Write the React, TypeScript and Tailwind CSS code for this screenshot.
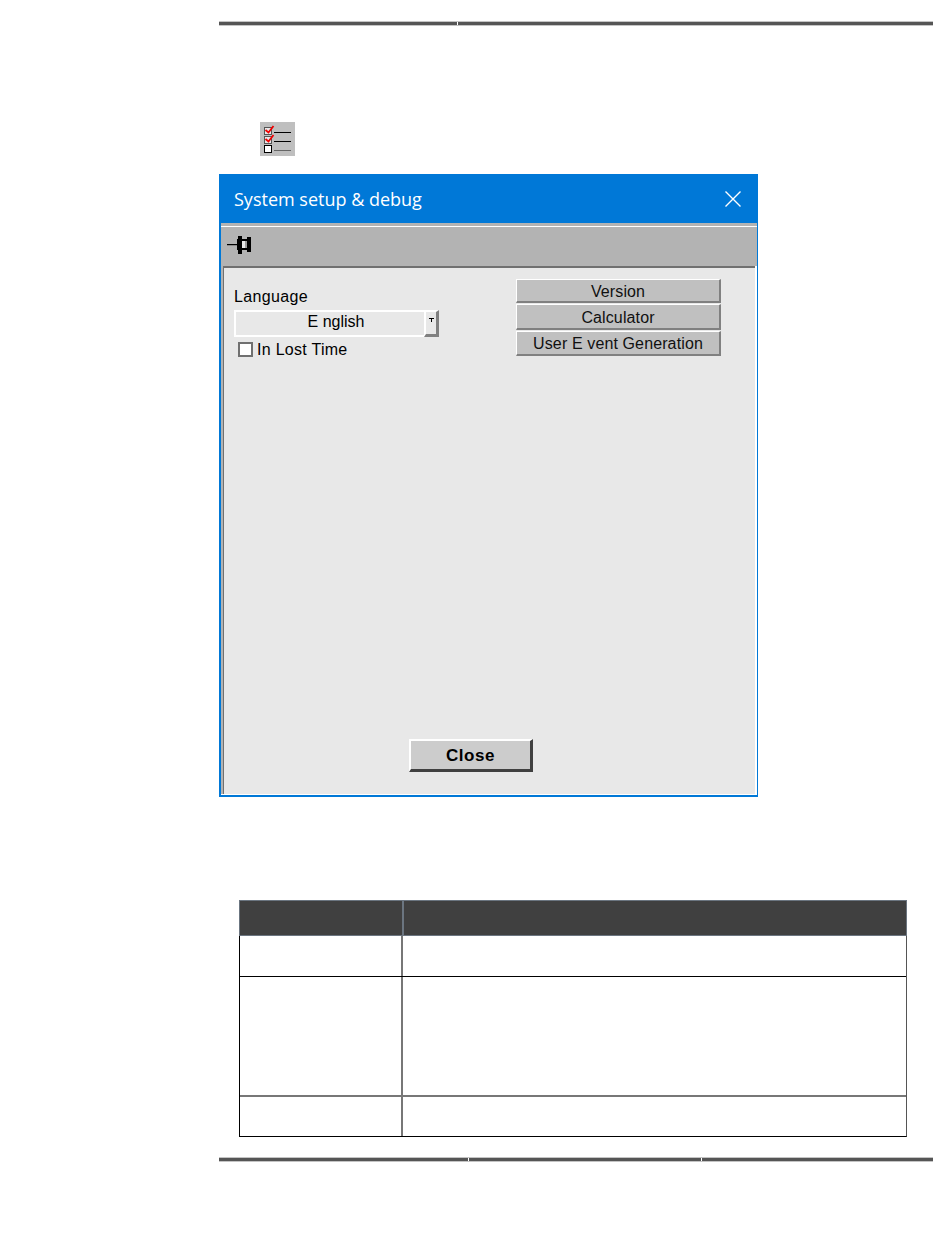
function Rule({ segments }: { segments: number[] }) {
  return (
    <div className="flex gap-px w-[714px] h-[5px] border-y border-[#c4c4c4] bg-white">
      {segments.map((w, i) => (
        <div key={i} className="h-full bg-[#555555]" style={{ flex: `${w} 0 0` }} />
      ))}
    </div>
  );
}

function ChecklistIcon() {
  return (
    <svg width="35" height="34" viewBox="0 0 35 34" className="block bg-[#bfbfbf]">
      <rect x="4.5" y="5.5" width="7" height="7" fill="#e8e8e8" stroke="#555" />
      <rect x="4.5" y="14.5" width="7" height="7" fill="#e8e8e8" stroke="#555" />
      <rect x="4.5" y="23.5" width="7" height="7" fill="#fff" stroke="#000" />
      <path d="M5.5 8l3 2.5 5-6.5M5.5 17l3 2.5 5-6.5" fill="none" stroke="#f00000" strokeWidth="1.8" />
      <path d="M14 10.5h17M14 19.5h17" stroke="#000" />
      <path d="M14 28.5h17" stroke="#666" />
    </svg>
  );
}

function PinIcon() {
  return (
    <svg width="25" height="18" viewBox="0 0 25 18" className="block">
      <path d="M0 8.5h11" stroke="#000" />
      <path d="M0 9.5h11" stroke="#8a8a8a" />
      <path d="M10 3h1v11h-1z" fill="#000" />
      <path d="M11 0h4v18h-4z" fill="#000" />
      <path d="M15 3h5v2h-5zM15 12h5v2h-5z" fill="#000" />
      <path d="M20 1h4v15h-4z" fill="#000" />
      <path d="M15 5h5v7h-5z" fill="#e8e8e8" />
      <path d="M18 5h2v7h-2z" fill="#9a9a9a" />
    </svg>
  );
}

function SideButton({ label, className }: { label: string; className: string }) {
  return (
    <div
      className={`flex items-center justify-center bg-[#c0c0c0] border-t border-l border-t-white border-l-white border-r-2 border-b-2 border-r-[#808080] border-b-[#808080] text-[16px] leading-none tracking-[0.12px] text-[#111111] ${className}`}
    >
      {label}
    </div>
  );
}

function Dialog() {
  return (
    <div className="flex flex-col w-[539px] h-[623px] border-t border-r border-b-[2px] border-l-2 border-[#0078d7] bg-white">
      <div className="flex items-center justify-between h-[48px] -ml-px bg-[#0078d7] pl-[14px] pr-[16px] shrink-0">
        <span className="font-['Open_Sans',sans-serif] text-[18px] text-white">System setup &amp; debug</span>
        <svg width="16" height="16" viewBox="0 0 16 16">
          <path d="M.5.5l15 15M15.5.5l-15 15" stroke="#fff" strokeWidth="1.4" fill="none" />
        </svg>
      </div>
      <div className="h-[3px] bg-[#b3b3b3] shrink-0" />
      <div className="h-px bg-white shrink-0" />
      <div className="flex items-center h-[39px] bg-[#b3b3b3] pl-[6px] pb-[4px] shrink-0">
        <PinIcon />
      </div>
      <div className="flex flex-1 min-h-0 pr-[2px]">
        <div className="w-[2px] bg-[#b3b3b3] shrink-0" />
        <div className="flex flex-col flex-1 bg-[#e8e8e8] border-t-2 border-l border-[#707070]">
          <div className="flex flex-1 justify-between pr-[34px] pt-[11px]">
            <div className="flex flex-col pl-[10px] w-[216px]">
              <span className="text-[16px] leading-[18px] mt-[9px] tracking-[0.35px]">Language</span>
              <div className="flex mt-[4px] h-[27px]">
                <div className="flex items-center justify-center w-[190px] border-y-2 border-l-2 border-white pl-[12px] pb-[4px] text-[16px]">
                  E nglish
                </div>
                <div className="flex justify-center w-[15px] bg-[#e8e8e8] border-t-2 border-l-2 border-white border-r-[3px] border-b-[3px] border-r-[#808080] border-b-[#808080] pt-[6px]">
                  <svg width="5" height="4" viewBox="0 0 5 4" className="block">
                    <path d="M0 .5h5M2.5 0v4" stroke="#000" />
                  </svg>
                </div>
              </div>
              <div className="flex items-center gap-[4px] mt-[5px] ml-[4px]">
                <div className="w-[15px] h-[15px] bg-white border-2 border-[#707070]" />
                <span className="text-[16px] leading-[15px] tracking-[0.28px]">In Lost Time</span>
              </div>
            </div>
            <div className="flex flex-col gap-px w-[205px]">
              <SideButton label="Version" className="h-[24px] pt-[2px]" />
              <SideButton label="Calculator" className="h-[26px] pt-[3px]" />
              <SideButton label="User E vent Generation" className="h-[25px] pt-px" />
            </div>
          </div>
          <div className="flex pl-[185px] pb-[22px]">
            <div className="flex items-center justify-center w-[124px] h-[33px] pt-[2px] bg-[#cccccc] border-t-2 border-l-2 border-t-white border-l-white border-r-[3px] border-b-[3px] border-r-[#404040] border-b-[#404040] text-[17px] font-semibold tracking-[0.5px]">
              Close
            </div>
          </div>
          <div className="h-px bg-white -ml-[3px] shrink-0" />
        </div>
      </div>
    </div>
  );
}

function InfoTable() {
  const rows = ["h-[40px]", "h-[119px] border-t border-black", "h-[41px] border-t-2 border-[#777777]"];
  return (
    <div className="w-[668px] border-b border-l border-r border-b-black border-l-black border-r-[#555555]">
      <div className="grid grid-cols-[164px_1fr] h-[36px] bg-[#404040] border border-[#6b7580] -mx-px">
        <div className="border-r-2 border-[#6b7580]" />
        <div />
      </div>
      {rows.map((h) => (
        <div key={h} className={`grid grid-cols-[163px_1fr] ${h}`}>
          <div className="border-r-2 border-[#777777]" />
          <div />
        </div>
      ))}
    </div>
  );
}

export default function App() {
  return (
    <div className="w-[950px] h-[1248px] bg-white overflow-hidden pl-[219px] pt-[21px] font-['Liberation_Sans',Arial,sans-serif] text-black">
      <Rule segments={[238, 475]} />
      <div className="ml-[41px] mt-[96px]">
        <ChecklistIcon />
      </div>
      <div className="mt-[18px]">
        <Dialog />
      </div>
      <div className="ml-[20px] mt-[103px]">
        <InfoTable />
      </div>
      <div className="mt-[20px]">
        <Rule segments={[249, 233, 231]} />
      </div>
    </div>
  );
}
